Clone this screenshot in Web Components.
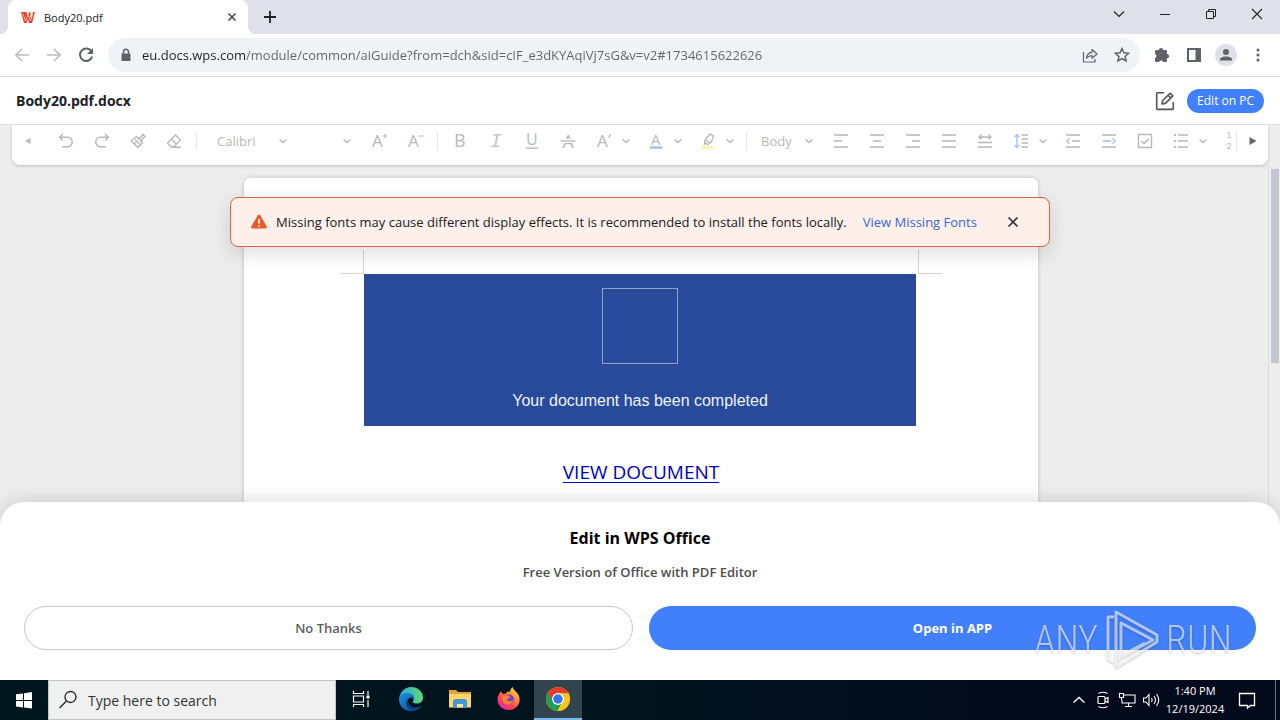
<!DOCTYPE html>
<html lang="en">
<head>
<meta charset="utf-8">
<meta name="viewport" content="width=device-width, initial-scale=1">
<title>Body20.pdf</title>
<style>
  html, body {
    height: 100%;
    margin: 0;
  }
  body {
    display: flex;
    flex-direction: column;
    overflow: hidden;
    background: #fff;
    font-family: "Open Sans", "Noto Sans", sans-serif;
    font-size: 13px;
    color: #202124;
  }
</style>
</head>
<body>
  <browser-tabs></browser-tabs>
  <address-bar></address-bar>
  <doc-header name="Body20.pdf.docx"></doc-header>
  <doc-workspace>
    <format-toolbar slot="toolbar"></format-toolbar>
    <doc-page></doc-page>
    <font-notice slot="notice">Missing fonts may cause different display effects. It is recommended to install the fonts locally.</font-notice>
    <app-sheet slot="sheet">
      <span slot="title">Edit in WPS Office</span>
      <span slot="text">Free Version of Office with PDF Editor</span>
    </app-sheet>
  </doc-workspace>
  <task-bar></task-bar>
  <run-watermark></run-watermark>

<script>
const RESET = `
  * { box-sizing: border-box; }
  :host { box-sizing: border-box; }
  button, input, select { font: inherit; color: inherit; background: none; border: 0; margin: 0; padding: 0; outline: 0; }
  button { display: flex; align-items: center; justify-content: center; cursor: pointer; }
`;

// name: [size, markup]
const ICONS = {
  wps: [16, '<path d="M1 3h5.500l.8 5L9 3.500h2L10 8l1.500 1L13 3h2l-3 11H9L8 10l-1.500 4H4L1 3z" fill="#ea4025"/><path d="M3 4.500 5.500 12 8 5.500 10.500 12 13 4.500" fill="none" stroke="#ffb39f"/>'],
  close: [16, '<path d="m4.500 4.500 7 7m0-7-7 7" stroke="currentColor" stroke-width="1.600"/>'],
  plus: [16, '<path d="M8 2v12M2 8h12" stroke="currentColor" stroke-width="1.800"/>'],
  down: [16, '<path d="m3 5.500 5 5 5-5" fill="none" stroke="currentColor" stroke-width="1.200"/>'],
  minimize: [16, '<path d="M3 8.500h10" stroke="currentColor"/>'],
  restore: [16, '<path d="M3.500 5.500h7v7h-7zM5.500 5.500v-2h7v7h-2" fill="none" stroke="currentColor"/>'],
  shut: [16, '<path d="m3 3 10 10M13 3 3 13" stroke="currentColor" stroke-width="1.100"/>'],
  cross: [16, '<path d="m3.500 3.500 9 9m0-9-9 9" stroke="currentColor" stroke-width="1.700"/>'],
  back: [18, '<path d="M16 9H3m6-6L3 9l6 6" fill="none" stroke="currentColor" stroke-width="1.700"/>'],
  forward: [18, '<path d="M2 9h13M9 3l6 6-6 6" fill="none" stroke="currentColor" stroke-width="1.700"/>'],
  reload: [18, '<path d="M14.500 5.500a6.200 6.200 0 1 0 .7 5" fill="none" stroke="currentColor" stroke-width="2"/><path d="M16 2v6h-6z" fill="currentColor"/>'],
  lock: [16, '<path d="M3.500 6.500h9V14h-9z" fill="currentColor"/><path d="M5.500 7V4.800a2.500 2.500 0 0 1 5 0V7" fill="none" stroke="currentColor" stroke-width="1.500"/>'],
  share: [18, '<path d="M2.500 6v10h11.500v-3" fill="none" stroke="currentColor" stroke-width="1.200"/><path d="M5.500 12c.3-3.500 2.500-5.500 5.500-5.700V3.500L16 8l-5 4.200V9.600c-2.300 0-4 .7-5.500 2.400z" fill="none" stroke="currentColor" stroke-width="1.200" stroke-linejoin="round"/>'],
  star: [18, '<path d="m9 2.500 1.900 4.300 4.700.5-3.500 3.100 1 4.600L9 12.600 4.900 15l1-4.600-3.500-3.100 4.700-.5z" fill="none" stroke="currentColor" stroke-width="1.500"/>'],
  puzzle: [18, '<path d="M2 5.500A1.500 1.500 0 0 1 3.500 4H6a2.100 2.100 0 0 1 4.200 0h2.600A1.200 1.200 0 0 1 14 5.200v2.900a2.100 2.100 0 0 1 0 4.200v2.500a1.200 1.200 0 0 1-1.200 1.200H10a2.100 2.100 0 0 0-4 0H3.200A1.200 1.200 0 0 1 2 14.800V12a2.100 2.100 0 0 0 0-4z" fill="currentColor"/>'],
  panel: [18, '<path d="M3 3h12v12H3z" fill="none" stroke="currentColor" stroke-width="2"/><path d="M10.500 3H15v12h-4.500z" fill="currentColor"/>'],
  person: [22, '<circle cx="11" cy="11" r="11" fill="#dee1e9"/><circle cx="11" cy="8" r="3" fill="currentColor"/><path d="M5 16.500v-1c0-4 12-4 12 0v1z" fill="currentColor"/>'],
  dots: [18, '<g fill="currentColor"><circle cx="9" cy="4" r="1.500"/><circle cx="9" cy="9" r="1.500"/><circle cx="9" cy="14" r="1.500"/></g>'],
  edit: [20, '<g fill="none" stroke="currentColor" stroke-width="1.600" stroke-linejoin="round"><path d="M9 1.800H2.500a.8.800 0 0 0-.8.800v15a.8.800 0 0 0 .8.800h15a.8.800 0 0 0 .8-.8V11"/><path d="m7 13 .6-3.500 7.500-7.300 2.700 2.700-7.300 7.500zM13 4.300l2.700 2.700"/></g>'],
  tri_left: [16, '<path d="M10.500 5v6L5 8z" fill="currentColor"/>'],
  tri_right: [16, '<path d="M4.500 4v8l7-4z" fill="currentColor"/>'],
  undo: [16, '<path d="M5 1 1.500 4.200 5 7.500M2 4.200h7.500a4.700 4.700 0 0 1 0 9.500H4" fill="none" stroke="currentColor" stroke-width="1.500"/>'],
  redo: [16, '<path d="m11 1 3.500 3.200L11 7.500M14 4.200H6.500a4.700 4.700 0 0 0 0 9.500H12" fill="none" stroke="currentColor" stroke-width="1.500"/>'],
  brush: [16, '<g fill="none" stroke="currentColor" stroke-width="1.400" stroke-linejoin="round"><path d="m6.500 3.500 6 6L8 14.500 1 8z"/><path d="m8 5 2.500-.5L13 1.500 15 3.500l-3 2.500-.5 2.500M5 6.500l5 5M4 11l2-2"/></g>'],
  eraser: [16, '<g fill="none" stroke="currentColor" stroke-width="1.400" stroke-linejoin="round"><path d="m9.500 2 5 5-7 7H5.500L1.500 10zM5.500 6l5 5M6 14.200h9"/></g>'],
  chevron: [16, '<path d="m4.500 6.500 3.500 3 3.500-3" fill="none" stroke="currentColor" stroke-width="1.500"/>'],
  grow: [18, '<text x="2" y="15" font-size="17">A</text><path d="M15 1.500v5M12.500 4h5" stroke="currentColor"/>'],
  shrink: [18, '<text x="2" y="15" font-size="17">A</text><path d="M12.500 4h5" stroke="currentColor"/>'],
  bold: [18, '<text x="3" y="15" font-size="18">B</text>'],
  italic: [18, '<text class="slab" x="3" y="15" font-size="20">I</text>'],
  underline: [18, '<text x="3" y="13" font-size="16">U</text><path d="M3 16.200h12" stroke="currentColor" stroke-width="1.400"/>'],
  strike: [18, '<text x="3.500" y="16" font-size="18">A</text><path d="M0 9h18" stroke="#fff" stroke-width="4"/><path d="M1.500 9h15" stroke="currentColor" stroke-width="1.400"/>'],
  effect: [18, '<text x="2" y="15" font-size="17">A</text><path d="m15.500 2-1.500 4" stroke="currentColor" stroke-width="1.300"/>'],
  color: [18, '<text x="4" y="12.500" font-size="15">A</text><path d="M3 15.500h12.500" stroke="#a9bff0" stroke-width="2.400"/>'],
  marker: [18, '<path d="m5.500 12 .5-4 5-6 3.500 2-2.500 6.500-3.500 2-2-1.500zM7 8l4 3" fill="none" stroke="currentColor" stroke-width="1.400"/><path d="M2.500 15.500h11.500" stroke="#f4f49a" stroke-width="2.400"/>'],
  left: [16, '<path d="M1 2h14M1 8h8M1 14h14" stroke="currentColor" stroke-width="1.500"/>'],
  center: [16, '<path d="M1 2h14M4 8h8M1 14h14" stroke="currentColor" stroke-width="1.500"/>'],
  right: [16, '<path d="M1 2h14M7 8h8M1 14h14" stroke="currentColor" stroke-width="1.500"/>'],
  justify: [16, '<path d="M1 2h14M1 8h14M1 14h14" stroke="currentColor" stroke-width="1.500"/>'],
  spread: [16, '<path d="M1 9.500h14M1 14h14M2 4h12M4.500 1.500 2 4l2.500 2.500M11.500 1.500 14 4l-2.500 2.500" fill="none" stroke="currentColor" stroke-width="1.400"/>'],
  spacing: [16, '<path d="M8.500 2H15M8.500 6H15M8.500 10H15M8.500 14H15" stroke="currentColor" stroke-width="1.400"/><path d="M4 2v12M1.500 4 4 1.500 6.500 4M1.500 12 4 14.500 6.500 12" fill="none" stroke="#a9c1f5" stroke-width="1.400"/>'],
  outdent: [16, '<path d="M1 2h14M7 8h8M1 14h14" stroke="currentColor" stroke-width="1.500"/><path d="M4.500 5.500 2 8l2.500 2.500" fill="none" stroke="#a9b9ee" stroke-width="1.400"/>'],
  indent: [16, '<path d="M1 2h14M1 14h14" stroke="currentColor" stroke-width="1.500"/><path d="M2 8h8M11.500 5.500 14 8l-2.500 2.500" fill="none" stroke="#a9b9ee" stroke-width="1.400"/>'],
  check: [16, '<path d="M1.500 1.500h13v13h-13zM4.500 8l2.500 2.500 5-5" fill="none" stroke="currentColor" stroke-width="1.400"/>'],
  bullets: [16, '<path d="M5 2h10M5 8h10M5 14h10" stroke="currentColor" stroke-width="1.500"/><path d="M1 2h2M1 8h2M1 14h2" stroke="currentColor" stroke-width="2"/>'],
  warning: [18, '<path d="M7.700 2.200a1.500 1.500 0 0 1 2.600 0l6.400 11.300a1.300 1.300 0 0 1-1.200 2H2.500a1.300 1.300 0 0 1-1.200-2z" fill="#eb5a28"/><path d="M9 6v4.500M9 12v1.800" stroke="#fff" stroke-width="1.700"/>'],
  windows: [18, '<path d="m1 3.300 7-.9V9H1zM9 2.200 17 1v8H9zM1 10h7v6.400l-7-.9zM9 10h8v7.500l-8-1z" fill="#fff"/>'],
  search: [20, '<circle cx="12.500" cy="7" r="5.500" fill="none" stroke="currentColor" stroke-width="1.300"/><path d="m8.500 11-7 7" stroke="currentColor" stroke-width="1.300"/>'],
  taskview: [18, '<g fill="none" stroke="#fff" stroke-width="1.200"><path d="M1.500 1v2.500h10V1M1.500 17v-2.500h10V17M1.500 6h10v6h-10zM16 1v4M16 10v7"/></g><path d="M14.500 5.500h3v3h-3z" fill="#fff"/>'],
  edge: [24, '<defs><linearGradient id="e1" x1="0" y1="0" x2="1" y2="0"><stop stop-color="#2aa6dd"/><stop offset="1" stop-color="#5bdc74"/></linearGradient><linearGradient id="e2" x1="0" y1="0" x2="1" y2="1"><stop stop-color="#1a8fd8"/><stop offset="1" stop-color="#0b4fa8"/></linearGradient></defs><path d="M0 12C1 5 5.500 0 12 0c7 0 12 5 12 10.500 0 4-3 6-6.500 6-3 0-4.500-1-3.500-2.500 1.500-2 .5-6.500-4-6.500C5 7.500 1 9 0 12z" fill="url(#e1)"/><path d="M0 12c1-4 4.500-6 8.500-6 5 0 7 3.500 6.500 6-1-2-5-2.500-6 1-1 3.500 2 8 7 8 2.500 0 4.500-.7 6.500-2-2 3-5.500 5-10.500 5C5 24 0 19 0 12z" fill="url(#e2)"/><path d="M9.500 11c-2 5 2 9.500 7 9.500 2.500 0 4.500-.7 6-1.500-1.500 3-4.500 4.500-8 5C8 23 4 16 9.500 11z" fill="#0d3f7c"/>'],
  folder: [24, '<path d="M1 3h7l2 2h13v15H1z" fill="#e2a33d"/><path d="M1 7h22v13.500H1z" fill="#fcd56d"/><path d="M5 21v-7.500L7 12h10l2 1.500V21h-4v-4H9v4z" fill="#4595d1"/><path d="M9 17h6v3.500H9z" fill="#fbe3a1"/>'],
  firefox: [24, '<defs><linearGradient id="f1" x1="1" y1="0" x2=".3" y2="1"><stop stop-color="#fff04a"/><stop offset=".4" stop-color="#ff9130"/><stop offset=".75" stop-color="#ff3f55"/><stop offset="1" stop-color="#d62bb0"/></linearGradient></defs><path d="M4 4.500 6 7l3-.5C10 4 12 4 13 5c0-2 1-3.500 2.500-5 .5 3 5 5 6.500 9 2.500 8-3 14-10 14C5 23 0 18 .5 12 .7 9 2 6.500 4 4.500z" fill="url(#f1)"/><circle cx="12" cy="12.500" r="5" fill="#7540d4"/><path d="M6 9c2-1.500 4-1 5.500 0l2 1.500c-1.500 0-2.500 1-4 1.500 1 3 5 3 7 1-1 5-8 6-10.500 1.500C5 12.500 5 10.500 6 9z" fill="#ff8a2b"/>'],
  chrome: [24, '<circle cx="12" cy="12" r="12" fill="#fbbf16"/><path d="M1.600 6A12 12 0 0 1 22.400 6L12 6.500 7 15z" fill="#e33b2e"/><path d="M1.600 6A12 12 0 0 0 11.500 24l5-9-9-.5z" fill="#1f9f50"/><path d="M12 6.500h10.600A12 12 0 0 1 11.500 24l5-9z" fill="#fbc51c"/><circle cx="12" cy="12" r="6" fill="#fff"/><circle cx="12" cy="12" r="4.700" fill="#3378ea"/>'],
  up: [16, '<path d="m2.500 10.500 5.500-5 5.500 5" fill="none" stroke="#fff" stroke-width="1.300"/>'],
  camera: [18, '<g fill="none" stroke="#fff" stroke-width="1.200"><rect x="4" y="5.500" width="7" height="7" rx="1"/><path d="m11 8 3-1.500v5L11 10M4.500 2.500q4.500-2.500 9 0M4.500 15.500q4.500 2.500 9 0"/></g>'],
  network: [18, '<g fill="none" stroke="#fff" stroke-width="1.100"><path d="M6 4h11v8H4V9M10.500 12v3.500M7 15.500h7M1.500 2.500h4v4h-4zM3.500 6.500V9"/></g>'],
  sound: [18, '<g fill="none" stroke="#fff" stroke-width="1.100"><path d="M1.500 7H4l3-3.500v11L4 11H1.500zM9.500 7q1.500 2 0 4M12 5q3 4 0 8M14.500 3q4.500 6 0 12"/></g>'],
  message: [18, '<path d="M1.500 2.500h15v12h-4L9.500 17v-2.500h-8z" fill="none" stroke="#fff" stroke-width="1.300"/>']
};

class UiIcon extends HTMLElement {
  connectedCallback() {
    const [size, markup] = ICONS[this.getAttribute('name')];
    this.attachShadow({ mode: 'open' });
    this.shadowRoot.innerHTML = `
      <style>
        :host { display: inline-flex; flex: none; }
        svg { display: block; overflow: visible; }
        text { fill: currentColor; font-family: "Open Sans", sans-serif; }
        .slab { font-family: "Liberation Mono", monospace; font-style: italic; opacity: .8; }
      </style>
      <svg width="${size}" height="${size}" viewBox="0 0 ${size} ${size}" aria-hidden="true">${markup}</svg>
    `;
  }
}

class BrowserTabs extends HTMLElement {
  connectedCallback() {
    this.attachShadow({ mode: 'open' });
    this.shadowRoot.innerHTML = `
      <style>
        ${RESET}
        :host {
          display: flex;
          flex: none;
          height: 34px;
          padding-left: 8px;
          background: #dee1e9;
        }
        .tab {
          position: relative;
          display: flex;
          align-items: center;
          gap: 8px;
          width: 240px;
          padding: 0 8px 0 12px;
          background: #fff;
          border-radius: 8px 8px 0 0;
        }
        .tab::before, .tab::after {
          content: "";
          position: absolute;
          bottom: 0;
          width: 8px;
          height: 8px;
        }
        .tab::before { right: 100%; background: radial-gradient(circle at 0 0, transparent 8px, #fff 8px); }
        .tab::after { left: 100%; background: radial-gradient(circle at 100% 0, transparent 8px, #fff 8px); }
        .title { flex: 1; font-size: 11px; }
        .tab button { color: #45484c; }
        .new { width: 44px; }
        .window { display: flex; margin-left: auto; height: 28px; }
        .window button { width: 46px; }
      </style>
      <div class="tab">
        <ui-icon name="wps"></ui-icon>
        <span class="title">Body20.pdf</span>
        <button aria-label="Close tab"><ui-icon name="close"></ui-icon></button>
      </div>
      <button class="new" aria-label="New tab"><ui-icon name="plus"></ui-icon></button>
      <div class="window">
        <button aria-label="Search tabs"><ui-icon name="down"></ui-icon></button>
        <button aria-label="Minimize"><ui-icon name="minimize"></ui-icon></button>
        <button aria-label="Restore"><ui-icon name="restore"></ui-icon></button>
        <button aria-label="Close"><ui-icon name="shut"></ui-icon></button>
      </div>
    `;
  }
}

class AddressBar extends HTMLElement {
  connectedCallback() {
    this.attachShadow({ mode: 'open' });
    this.shadowRoot.innerHTML = `
      <style>
        ${RESET}
        :host {
          display: flex;
          flex: none;
          align-items: center;
          height: 43px;
          padding: 0 6px;
          border-bottom: 1px solid #d5d7da;
          color: #5f6368;
        }
        button { width: 32px; height: 32px; }
        button:disabled { color: #babcbe; }
        .box {
          display: flex;
          flex: 1;
          align-items: center;
          gap: 8px;
          height: 34px;
          margin: 0 6px;
          padding: 0 2px 0 10px;
          border-radius: 17px;
          background: #f0f3f5;
        }
        .actions { display: flex; }
        /* host part of the address is darker than the path */
        input {
          flex: 1;
          min-width: 0;
          background: linear-gradient(90deg, #202124 104px, #5f6368 104px);
          -webkit-background-clip: text;
          background-clip: text;
          -webkit-text-fill-color: transparent;
        }
      </style>
      <button aria-label="Back" disabled><ui-icon name="back"></ui-icon></button>
      <button aria-label="Forward" disabled><ui-icon name="forward"></ui-icon></button>
      <button aria-label="Reload"><ui-icon name="reload"></ui-icon></button>
      <div class="box">
        <ui-icon name="lock"></ui-icon>
        <input type="text" aria-label="Address" value="eu.docs.wps.com/module/common/aiGuide?from=dch&amp;sid=cIF_e3dKYAqiVj7sG&amp;v=v2#1734615622626">
        <div class="actions">
          <button aria-label="Share"><ui-icon name="share"></ui-icon></button>
          <button aria-label="Bookmark"><ui-icon name="star"></ui-icon></button>
        </div>
      </div>
      <button aria-label="Extensions"><ui-icon name="puzzle"></ui-icon></button>
      <button aria-label="Side panel"><ui-icon name="panel"></ui-icon></button>
      <button aria-label="Profile"><ui-icon name="person"></ui-icon></button>
      <button aria-label="Menu"><ui-icon name="dots"></ui-icon></button>
    `;
  }
}

class DocHeader extends HTMLElement {
  connectedCallback() {
    this.attachShadow({ mode: 'open' });
    this.shadowRoot.innerHTML = `
      <style>
        ${RESET}
        :host {
          display: flex;
          flex: none;
          align-items: center;
          gap: 12px;
          height: 48px;
          padding: 0 16px;
          border-bottom: 1px solid #dcdcdc;
          background: #fff;
        }
        h1 { flex: 1; margin: 0; font-size: 14px; font-weight: 700; }
        .icon { width: 20px; height: 24px; color: #555; }
        .primary {
          height: 24px;
          padding: 0 10px;
          border-radius: 12px;
          background: #417ffb;
          color: #fff;
          font-size: 12px;
        }
      </style>
      <h1>${this.getAttribute('name')}</h1>
      <button class="icon" aria-label="Edit"><ui-icon name="edit"></ui-icon></button>
      <button class="primary">Edit on PC</button>
    `;
  }
}

class DocWorkspace extends HTMLElement {
  connectedCallback() {
    this.attachShadow({ mode: 'open' });
    this.shadowRoot.innerHTML = `
      <style>
        :host {
          position: relative;
          display: flex;
          flex-direction: column;
          flex: 1;
          min-height: 0;
          overflow: hidden;
          background: #ededed;
        }
        .toolbar { flex: none; padding: 0 12px; }
        .view { flex: 1; min-height: 0; padding: 13px 0 0 2px; overflow: hidden; }
        .notice { position: absolute; top: 72px; left: 0; right: 0; display: flex; justify-content: center; }
        .sheet { position: absolute; left: 0; right: 0; bottom: 0; }
        .scroll {
          position: absolute;
          top: 40px;
          right: 0;
          bottom: 0;
          width: 12px;
          padding: 4px 1px 0 2px;
          box-sizing: border-box;
          border-left: 1px solid #dcdcdc;
        }
        .thumb { height: 194px; background: #c2c6d1; }
      </style>
      <div class="toolbar"><slot name="toolbar"></slot></div>
      <div class="view"><slot></slot></div>
      <div class="scroll"><div class="thumb"></div></div>
      <div class="notice"><slot name="notice"></slot></div>
      <div class="sheet"><slot name="sheet"></slot></div>
    `;
  }
}

class FormatToolbar extends HTMLElement {
  button(icon, label) {
    return `<button class="tool" aria-label="${label}"><ui-icon name="${icon}"></ui-icon></button>`;
  }

  split(icon, label) {
    return `<button class="split" aria-label="${label}"><span><ui-icon name="${icon}"></ui-icon></span><ui-icon name="chevron"></ui-icon></button>`;
  }

  connectedCallback() {
    this.attachShadow({ mode: 'open' });
    this.shadowRoot.innerHTML = `
      <style>
        ${RESET}
        :host {
          display: flex;
          height: 40px;
          padding-bottom: 8px;
          background: #fff;
          border-radius: 0 0 8px 8px;
          box-shadow: 0 1px 3px rgba(0, 0, 0, .22);
          color: #b8b8b8;
        }
        .end { flex: none; width: 32px; }
        .end.next { color: #666; border-left: 1px solid #e6e6e6; margin: 6px 0; }
        .tools { display: flex; flex: 1; min-width: 0; overflow: hidden; padding-left: 4px; }
        .tool { flex: none; width: 36px; }
        .split { flex: none; width: 52px; }
        .split span { display: flex; justify-content: center; width: 28px; }
        i { flex: none; width: 1px; margin: 7px 4px; background: #e6e6e6; }
        .pick { position: relative; display: flex; flex: none; align-items: center; }
        .pick select { appearance: none; width: 100%; height: 100%; padding: 0 22px 0 10px; font-size: 13px; }
        .pick ui-icon { position: absolute; right: 6px; pointer-events: none; }
        .font { width: 96px; }
        .font select { padding-left: 16px; }
        .size { width: 64px; }
        .style { width: 72px; }
        .numbers { flex-direction: column; width: 28px; font: 9px/11px "Liberation Sans", sans-serif; }
      </style>
      <button class="end" aria-label="Scroll left"><ui-icon name="tri_left"></ui-icon></button>
      <div class="tools">
        ${this.button('undo', 'Undo')}
        ${this.button('redo', 'Redo')}
        ${this.button('brush', 'Format painter')}
        ${this.button('eraser', 'Clear format')}
        <i></i>
        <div class="pick font"><select aria-label="Font"><option>Calibri</option></select><ui-icon name="chevron"></ui-icon></div>
        <div class="pick size"><select aria-label="Font size"><option></option></select><ui-icon name="chevron"></ui-icon></div>
        ${this.button('grow', 'Increase font size')}
        ${this.button('shrink', 'Decrease font size')}
        <i></i>
        ${this.button('bold', 'Bold')}
        ${this.button('italic', 'Italic')}
        ${this.button('underline', 'Underline')}
        ${this.button('strike', 'Strikethrough')}
        ${this.split('effect', 'Text effects')}
        ${this.split('color', 'Font color')}
        ${this.split('marker', 'Highlight')}
        <i></i>
        <div class="pick style"><select aria-label="Style"><option>Body</option></select><ui-icon name="chevron"></ui-icon></div>
        ${this.button('left', 'Align left')}
        ${this.button('center', 'Center')}
        ${this.button('right', 'Align right')}
        ${this.button('justify', 'Justify')}
        ${this.button('spread', 'Distribute')}
        ${this.split('spacing', 'Line spacing')}
        ${this.button('outdent', 'Decrease indent')}
        ${this.button('indent', 'Increase indent')}
        ${this.button('check', 'Checkbox')}
        ${this.split('bullets', 'Bullets')}
        <button class="tool numbers" aria-label="Numbering"><span>1</span><span>2</span></button>
      </div>
      <button class="end next" aria-label="Scroll right"><ui-icon name="tri_right"></ui-icon></button>
    `;
  }
}

class DocPage extends HTMLElement {
  connectedCallback() {
    this.attachShadow({ mode: 'open' });
    this.shadowRoot.innerHTML = `
      <style>
        :host {
          display: block;
          box-sizing: border-box;
          max-width: 794px;
          min-height: 1123px;
          margin: 0 auto;
          padding: 72px 96px;
          background: #fff;
          border-radius: 6px;
          box-shadow: 0 0 4px rgba(0, 0, 0, .2);
        }
        .marks { display: flex; justify-content: space-between; height: 24px; }
        .marks span { width: 24px; border: 0 solid #d4d4d4; border-bottom-width: 1px; box-sizing: border-box; }
        .marks span:first-child { border-right-width: 1px; }
        .marks span:last-child { border-left-width: 1px; }
        .body { padding: 0 24px; text-align: center; }
        .banner {
          display: flex;
          flex-direction: column;
          align-items: center;
          gap: 24px;
          margin-right: 2px;
          padding: 14px 0 12px;
          background: #294a9b;
          color: #eef2fb;
          font: 16px/26px "Liberation Sans", sans-serif;
        }
        .frame { box-sizing: border-box; width: 76px; height: 76px; border: 1px solid #8fa6cc; }
        p { margin: 32px 0; font-size: 19px; line-height: 28px; }
        a { color: #0000c0; text-underline-offset: 3px; text-decoration-thickness: 1px; }
      </style>
      <div class="marks"><span></span><span></span></div>
      <div class="body">
        <div class="banner">
          <div class="frame"></div>
          <div>Your document has been completed</div>
        </div>
        <p><a href="#document">VIEW DOCUMENT</a></p>
      </div>
    `;
  }
}

class FontNotice extends HTMLElement {
  connectedCallback() {
    this.attachShadow({ mode: 'open' });
    this.shadowRoot.innerHTML = `
      <style>
        ${RESET}
        :host {
          display: flex;
          align-items: center;
          height: 50px;
          padding: 0 28px 0 19px;
          border: 1px solid #d9633f;
          border-radius: 8px;
          background: #fdefe9;
          box-shadow: 0 6px 20px rgba(0, 0, 0, .14);
          font-size: 13px;
        }
        span { margin-left: 8px; color: #241a18; }
        a { margin-left: 16px; color: #3a69d0; text-decoration: none; }
        button { margin-left: 28px; width: 16px; color: #333; }
      </style>
      <ui-icon name="warning"></ui-icon>
      <span><slot></slot></span>
      <a href="#fonts">View Missing Fonts</a>
      <button aria-label="Close"><ui-icon name="cross"></ui-icon></button>
    `;
  }
}

class AppSheet extends HTMLElement {
  connectedCallback() {
    this.attachShadow({ mode: 'open' });
    this.shadowRoot.innerHTML = `
      <style>
        ${RESET}
        :host {
          display: block;
          padding: 24px 24px 30px;
          background: #fff;
          border-radius: 24px 24px 0 0;
          box-shadow: 0 0 20px rgba(0, 0, 0, .16);
          text-align: center;
        }
        h2 { margin: 0; font-size: 16px; line-height: 24px; color: #000; }
        p { margin: 11px 0 23px; font-size: 13px; line-height: 22px; font-weight: 600; color: #4d4d4d; }
        .actions { display: flex; gap: 16px; }
        button { flex: 1; height: 44px; border-radius: 22px; font-size: 13px; }
        .no { border: 1px solid #c8c8c8; color: #5e5e5e; font-weight: 600; }
        .open { background: #417ffb; color: #fff; font-weight: 700; }
      </style>
      <h2><slot name="title"></slot></h2>
      <p><slot name="text"></slot></p>
      <div class="actions">
        <button class="no">No Thanks</button>
        <button class="open">Open in APP</button>
      </div>
    `;
  }
}

class TaskBar extends HTMLElement {
  connectedCallback() {
    this.attachShadow({ mode: 'open' });
    this.shadowRoot.innerHTML = `
      <style>
        ${RESET}
        :host {
          display: flex;
          flex: none;
          height: 40px;
          background: linear-gradient(90deg, #00161f, #01131d 50%, #020a1b 80%);
          color: #fff;
        }
        .start { width: 48px; }
        .search {
          display: flex;
          align-items: center;
          gap: 10px;
          width: 288px;
          padding: 0 9px;
          border: 1px solid #c4c4c4;
          background: #f0f0f0;
          color: #222;
        }
        .search input { flex: 1; min-width: 0; font-size: 14px; }
        .search input::placeholder { color: #333; }
        .apps { display: flex; gap: 1px; }
        .apps button { width: 48px; border-bottom: 2px solid transparent; }
        .apps .view { width: 50px; }
        .apps .active { background: #33444e; border-bottom-color: #76b9ed; }
        .tray { display: flex; margin-left: auto; }
        .tray button { width: 24px; }
        .tray .clock { width: 64px; flex-direction: column; font-size: 11px; line-height: 18px; }
        .tray .notes { width: 40px; }
        .tray .desktop { width: 5px; margin-left: 8px; border-left: 1px solid #6c737c; }
      </style>
      <button class="start" aria-label="Start"><ui-icon name="windows"></ui-icon></button>
      <label class="search">
        <ui-icon name="search"></ui-icon>
        <input type="text" aria-label="Search" placeholder="Type here to search">
      </label>
      <div class="apps">
        <button class="view" aria-label="Task view"><ui-icon name="taskview"></ui-icon></button>
        <button aria-label="Edge"><ui-icon name="edge"></ui-icon></button>
        <button aria-label="Explorer"><ui-icon name="folder"></ui-icon></button>
        <button aria-label="Firefox"><ui-icon name="firefox"></ui-icon></button>
        <button class="active" aria-label="Chrome"><ui-icon name="chrome"></ui-icon></button>
      </div>
      <div class="tray">
        <button aria-label="Hidden icons"><ui-icon name="up"></ui-icon></button>
        <button aria-label="Meet now"><ui-icon name="camera"></ui-icon></button>
        <button aria-label="Network"><ui-icon name="network"></ui-icon></button>
        <button aria-label="Volume"><ui-icon name="sound"></ui-icon></button>
        <button class="clock"><span>1:40 PM</span><span>12/19/2024</span></button>
        <button class="notes" aria-label="Notifications"><ui-icon name="message"></ui-icon></button>
        <button class="desktop" aria-label="Show desktop"></button>
      </div>
    `;
  }
}

// Stamp that floats over the bottom right corner
class RunWatermark extends HTMLElement {
  connectedCallback() {
    this.attachShadow({ mode: 'open' });
    this.shadowRoot.innerHTML = `
      <style>
        :host {
          position: absolute;
          right: 48px;
          bottom: 48px;
          display: flex;
          align-items: center;
          gap: 5px;
          pointer-events: none;
          font: 300 38px/64px "Roboto Condensed", "Liberation Sans Narrow", sans-serif;
          color: rgba(255, 255, 255, .6);
          filter: drop-shadow(0 1px 1px rgba(0, 0, 0, .35));
        }
        svg { display: block; }
      </style>
      <span>ANY</span>
      <svg width="58" height="64" viewBox="0 0 58 64" fill="none" stroke="currentColor" stroke-width="3" stroke-linejoin="round">
        <path d="M11 9H5v42l5 3"/>
        <path d="M13 50V4l41 23v7L13 59v-7l37-20-32-17v33l24-13"/>
      </svg>
      <span>RUN</span>
    `;
  }
}

customElements.define('ui-icon', UiIcon);
customElements.define('browser-tabs', BrowserTabs);
customElements.define('address-bar', AddressBar);
customElements.define('doc-header', DocHeader);
customElements.define('doc-workspace', DocWorkspace);
customElements.define('format-toolbar', FormatToolbar);
customElements.define('doc-page', DocPage);
customElements.define('font-notice', FontNotice);
customElements.define('app-sheet', AppSheet);
customElements.define('task-bar', TaskBar);
customElements.define('run-watermark', RunWatermark);
</script>
</body>
</html>
